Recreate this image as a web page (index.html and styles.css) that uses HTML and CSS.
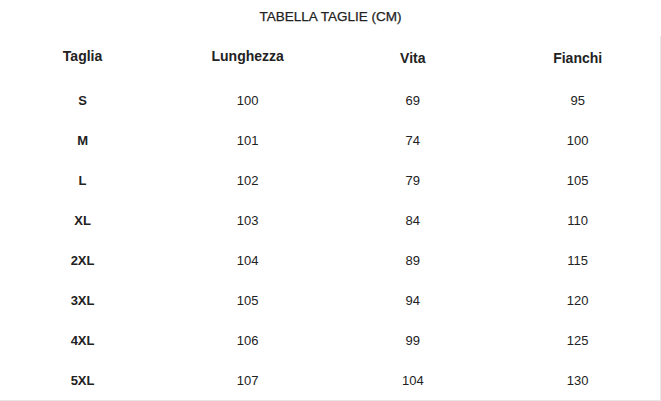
FILE: index.html
```html
<!DOCTYPE html>
<html lang="it">
<head>
<meta charset="utf-8">
<title>Tabella taglie</title>
<link rel="stylesheet" href="styles.css">
</head>
<body>
<div class="page">
  <div class="title">TABELLA TAGLIE (CM)</div>
  <table class="sizes">
    <thead>
      <tr class="head"><th class="hi">Taglia</th><th class="hi">Lunghezza</th><th>Vita</th><th>Fianchi</th></tr>
    </thead>
    <tbody>
      <tr><td class="sz">S</td><td>100</td><td>69</td><td>95</td></tr>
      <tr><td class="sz">M</td><td>101</td><td>74</td><td>100</td></tr>
      <tr><td class="sz">L</td><td>102</td><td>79</td><td>105</td></tr>
      <tr><td class="sz">XL</td><td>103</td><td>84</td><td>110</td></tr>
      <tr><td class="sz">2XL</td><td>104</td><td>89</td><td>115</td></tr>
      <tr><td class="sz">3XL</td><td>105</td><td>94</td><td>120</td></tr>
      <tr><td class="sz">4XL</td><td>106</td><td>99</td><td>125</td></tr>
      <tr><td class="sz">5XL</td><td>107</td><td>104</td><td>130</td></tr>
    </tbody>
  </table>
</div>
</body>
</html>
```
FILE: styles.css
```css
html, body {
  margin: 0;
  padding: 0;
  background: #ffffff;
}
body {
  font-family: "Liberation Sans", Arial, sans-serif;
  color: #222222;
}
.page {
  width: 661px;
}
.title {
  height: 36px;
  line-height: 34px;
  text-align: center;
  font-size: 13.5px;
  font-weight: normal;
  -webkit-text-stroke: 0.25px #222;
}
.sizes {
  width: 661px;
  border-collapse: collapse;
  table-layout: fixed;
  border-right: 1px solid #e6e6e6;
  border-bottom: 1px solid #e6e6e6;
}
.sizes tr {
  height: 40px;
}
.sizes tr.head {
  height: 44px;
}
.sizes th {
  padding: 0;
  font-size: 14px;
  line-height: 16px;
  font-weight: bold;
  text-align: center;
  vertical-align: top;
  padding-top: 14px;
}
.sizes th.hi {
  padding-top: 12px;
}
.sizes td {
  padding: 2px 0 0 0;
  font-size: 13px;
  line-height: 16px;
  text-align: center;
  vertical-align: middle;
}
.sizes td.sz {
  font-weight: bold;
}
```
